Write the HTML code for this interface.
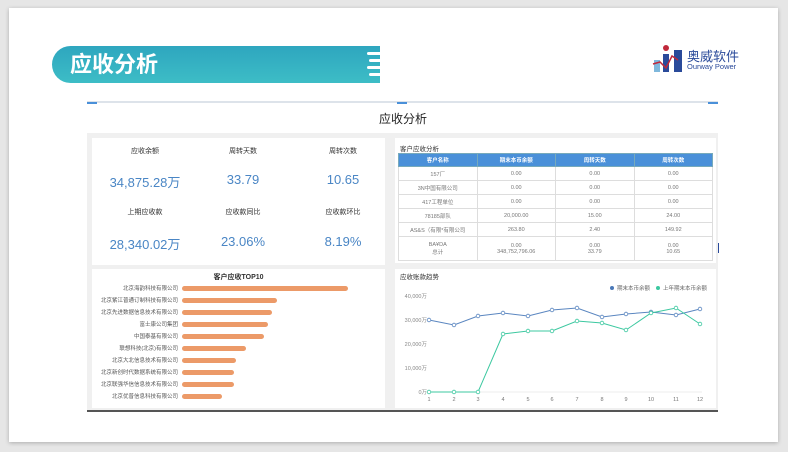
<!DOCTYPE html>
<html><head><meta charset="utf-8"><style>
*{margin:0;padding:0;box-sizing:border-box}
body{width:788px;height:452px;background:#e6e6e6;font-family:"Liberation Sans","Noto Sans CJK SC",sans-serif;position:relative;overflow:hidden}
.slide{position:absolute;left:9px;top:8px;width:769px;height:434px;background:#fff;box-shadow:0 1px 4px rgba(0,0,0,.25)}
.abs{position:absolute}
.banner{left:52px;top:46px;width:328px;height:37px;border-radius:19px 0 0 19px;background:linear-gradient(180deg,#2ea6bf,#3dbdc6);color:#fff;font-weight:bold;font-size:22px;line-height:37px;padding-left:18px}
.cut{background:#fff;height:3px;border-radius:2px}
.panel{background:#fff;position:absolute}
.lbl{font-size:7px;color:#333;text-align:center;position:absolute;width:100px}
.val{font-size:13px;color:#4a86c5;text-align:center;position:absolute;width:100px}
table{border-collapse:collapse;table-layout:fixed;font-size:5.5px;color:#777;position:absolute;left:398px;top:153px;width:315px}
td,th{border:1px solid #ddd;text-align:center;height:14px;width:25%}
th{background:#4a90d9;color:#fff;border-color:#7ab;font-weight:bold;height:13px}
.bl{position:absolute;right:610px;font-size:5.5px;color:#555;white-space:nowrap}
.bar{position:absolute;left:182px;height:5px;background:#ec9a68;border-radius:3px}
</style></head><body>
<div class="slide"></div>
<div class="abs banner">应收分析</div>
<div class="abs cut" style="left:367px;top:52px;width:16px"></div>
<div class="abs cut" style="left:369px;top:59px;width:14px"></div>
<div class="abs cut" style="left:367px;top:66px;width:16px"></div>
<div class="abs cut" style="left:369px;top:73px;width:14px"></div>
<svg class="abs" style="left:652px;top:44px" width="34" height="30" viewBox="0 0 34 30">
<rect x="2" y="16" width="6" height="12" fill="#7fb8dc"/><rect x="11" y="10" width="6" height="18" fill="#2a4a9a"/><rect x="22" y="6" width="8" height="22" fill="#2a4a9a"/>
<circle cx="14" cy="4" r="3" fill="#c0283a"/><path d="M1 20 L8 18 L14 24 L20 12 L26 16" stroke="#c0283a" stroke-width="1.5" fill="none"/></svg>
<div class="abs" style="left:687px;top:46px;font-size:13px;color:#2a4a9a">奥威软件</div>
<div class="abs" style="left:687px;top:62px;font-size:7.5px;color:#2a4a9a">Ourway Power</div>
<div class="abs" style="left:87px;top:101px;width:631px;height:2px;background:#dde3ea"></div>
<div class="abs" style="left:87px;top:102px;width:10px;height:2px;background:#4a90d9"></div>
<div class="abs" style="left:397px;top:102px;width:10px;height:2px;background:#4a90d9"></div>
<div class="abs" style="left:708px;top:102px;width:10px;height:2px;background:#4a90d9"></div>
<div class="abs" style="left:360px;top:110px;width:86px;text-align:center;font-size:12px;color:#222">应收分析</div>
<div class="abs" style="left:87px;top:133px;width:631px;height:278px;background:#f0f0f0"></div>
<div class="abs" style="left:87px;top:410px;width:631px;height:2px;background:#555"></div>
<div class="panel" style="left:92px;top:138px;width:293px;height:127px"></div>
<div class="panel" style="left:395px;top:138px;width:321px;height:125px"></div>
<div class="panel" style="left:92px;top:269px;width:293px;height:139px"></div>
<div class="panel" style="left:395px;top:269px;width:321px;height:139px"></div>
<div class="abs" style="left:718px;top:243px;width:1px;height:10px;background:#2a4a9a"></div>
<div class="lbl" style="left:95px;top:146px">应收余额</div>
<div class="lbl" style="left:193px;top:146px">周转天数</div>
<div class="lbl" style="left:293px;top:146px">周转次数</div>
<div class="val" style="left:95px;top:172px">34,875.28万</div>
<div class="val" style="left:193px;top:172px">33.79</div>
<div class="val" style="left:293px;top:172px">10.65</div>
<div class="lbl" style="left:95px;top:207px">上期应收款</div>
<div class="lbl" style="left:193px;top:207px">应收款同比</div>
<div class="lbl" style="left:293px;top:207px">应收款环比</div>
<div class="val" style="left:95px;top:234px">28,340.02万</div>
<div class="val" style="left:193px;top:234px">23.06%</div>
<div class="val" style="left:293px;top:234px">8.19%</div>
<div class="abs" style="left:400px;top:143px;font-size:6.5px;color:#333">客户应收分析</div>
<table>
<tr><th>客户名称</th><th>期末本币余额</th><th>周转天数</th><th>周转次数</th></tr>
<tr><td>157厂</td><td>0.00</td><td>0.00</td><td>0.00</td></tr>
<tr><td>3N中国有限公司</td><td>0.00</td><td>0.00</td><td>0.00</td></tr>
<tr><td>417工程单位</td><td>0.00</td><td>0.00</td><td>0.00</td></tr>
<tr><td>78185部队</td><td>20,000.00</td><td>15.00</td><td>24.00</td></tr>
<tr><td>AS&amp;S（有限*有限公司</td><td>263.80</td><td>2.40</td><td>149.92</td></tr>
<tr><td style="height:24px">BA¥DA<br>总计</td><td>0.00<br>348,752,796.06</td><td>0.00<br>33.79</td><td>0.00<br>10.65</td></tr>
</table>
<div class="abs" style="left:92px;top:272px;width:293px;text-align:center;font-size:7px;color:#333;font-weight:bold">客户应收TOP10</div>
<div class="bl" style="top:284px">北京海韵科技有限公司</div><div class="bar" style="top:286px;width:166px"></div>
<div class="bl" style="top:296px">北京紫江普通订制科技有限公司</div><div class="bar" style="top:298px;width:95px"></div>
<div class="bl" style="top:308px">北京先进数据信息技术有限公司</div><div class="bar" style="top:310px;width:90px"></div>
<div class="bl" style="top:320px">富士康公司集团</div><div class="bar" style="top:322px;width:86px"></div>
<div class="bl" style="top:332px">中国泰基有限公司</div><div class="bar" style="top:334px;width:82px"></div>
<div class="bl" style="top:344px">联想科技(北京)有限公司</div><div class="bar" style="top:346px;width:64px"></div>
<div class="bl" style="top:356px">北京大北信息技术有限公司</div><div class="bar" style="top:358px;width:54px"></div>
<div class="bl" style="top:368px">北京新创时代数据系统有限公司</div><div class="bar" style="top:370px;width:52px"></div>
<div class="bl" style="top:380px">北京联强华信信息技术有限公司</div><div class="bar" style="top:382px;width:52px"></div>
<div class="bl" style="top:392px">北京优普信息科技有限公司</div><div class="bar" style="top:394px;width:40px"></div>
<svg class="abs" style="left:395px;top:269px" width="321" height="139" viewBox="395 269 321 139" font-family="Liberation Sans,Noto Sans CJK SC,sans-serif">
<text x="400" y="279" font-size="6.5" fill="#333">应收账款趋势</text>
<circle cx="612" cy="288" r="2" fill="#4a78b8"/><text x="617" y="290" font-size="5.5" fill="#666">期末本币余额</text>
<circle cx="658" cy="288" r="2" fill="#3cc8a0"/><text x="663" y="290" font-size="5.5" fill="#666">上年期末本币余额</text>
<g font-size="5.5" fill="#888" text-anchor="end">
<text x="427" y="298">40,000万</text><text x="427" y="322">30,000万</text><text x="427" y="346">20,000万</text><text x="427" y="370">10,000万</text><text x="427" y="394">0万</text></g>
<line x1="429" y1="392" x2="702" y2="392" stroke="#ddd" stroke-width=".6"/>
<g font-size="5.5" fill="#777" text-anchor="middle">
<text x="429" y="401">1</text><text x="454" y="401">2</text><text x="478" y="401">3</text><text x="503" y="401">4</text><text x="528" y="401">5</text><text x="552" y="401">6</text><text x="577" y="401">7</text><text x="602" y="401">8</text><text x="626" y="401">9</text><text x="651" y="401">10</text><text x="676" y="401">11</text><text x="700" y="401">12</text></g>
<polyline fill="none" stroke="#5a86c0" stroke-width="1" points="429,320 454,325 478,316 503,313 528,316 552,310 577,308 602,317 626,314 651,312 676,315 700,309"/>
<polyline fill="none" stroke="#3cc8a0" stroke-width="1" points="429,392 454,392 478,392 503,334 528,331 552,331 577,321 602,323 626,330 651,313 676,308 700,324"/>
<g fill="#fff" stroke="#5a86c0" stroke-width=".8">
<circle cx="429" cy="320" r="1.8"/><circle cx="454" cy="325" r="1.8"/><circle cx="478" cy="316" r="1.8"/><circle cx="503" cy="313" r="1.8"/><circle cx="528" cy="316" r="1.8"/><circle cx="552" cy="310" r="1.8"/><circle cx="577" cy="308" r="1.8"/><circle cx="602" cy="317" r="1.8"/><circle cx="626" cy="314" r="1.8"/><circle cx="651" cy="312" r="1.8"/><circle cx="676" cy="315" r="1.8"/><circle cx="700" cy="309" r="1.8"/></g>
<g fill="#fff" stroke="#3cc8a0" stroke-width=".8">
<circle cx="429" cy="392" r="1.8"/><circle cx="454" cy="392" r="1.8"/><circle cx="478" cy="392" r="1.8"/><circle cx="503" cy="334" r="1.8"/><circle cx="528" cy="331" r="1.8"/><circle cx="552" cy="331" r="1.8"/><circle cx="577" cy="321" r="1.8"/><circle cx="602" cy="323" r="1.8"/><circle cx="626" cy="330" r="1.8"/><circle cx="651" cy="313" r="1.8"/><circle cx="676" cy="308" r="1.8"/><circle cx="700" cy="324" r="1.8"/></g>
</svg>
</body></html>
